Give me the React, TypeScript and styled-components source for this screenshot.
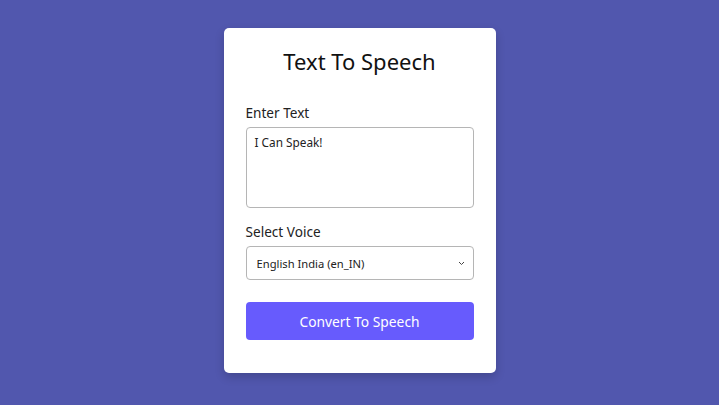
import React from "react";
import styled, { createGlobalStyle } from "styled-components";

const Global = createGlobalStyle`
  html, body { margin: 0; padding: 0; }
  body {
    background: #5157ae;
    font-family: "Noto Sans", "Open Sans", sans-serif;
  }
  * { box-sizing: border-box; }
`;

const Page = styled.div`
  width: 719px;
  height: 405px;
  display: flex;
  justify-content: center;
  align-items: flex-start;
  padding-top: 28px;
`;

const Card = styled.div`
  width: 272px;
  background: #ffffff;
  border-radius: 5px;
  padding: 18px 22px 33px;
  box-shadow: 0 4px 10px rgba(0, 0, 0, 0.18);
  display: flex;
  flex-direction: column;
`;

const Title = styled.h1`
  margin: 0 0 28px;
  font-size: 22px;
  font-weight: 400;
  color: #111;
  text-align: center;
  line-height: 30px;
`;

const Label = styled.label`
  font-size: 13.6px;
  color: #222;
  line-height: 18px;
  margin-bottom: 5px;
`;

const TextArea = styled.textarea`
  width: 228px;
  height: 81px;
  border: 1px solid #b5b5b5;
  border-radius: 4px;
  padding: 6px 8px;
  font-family: inherit;
  font-size: 11.8px;
  color: #222;
  resize: none;
  outline: none;
  margin-bottom: 15px;
`;

const SelectWrap = styled.div`
  position: relative;
  width: 228px;
  height: 34px;
  margin-bottom: 22px;
`;

const Select = styled.select`
  appearance: none;
  width: 100%;
  height: 100%;
  border: 1px solid #b5b5b5;
  border-radius: 4px;
  padding: 0 10px;
  background: #fff;
  font-family: inherit;
  font-size: 11.2px;
  color: #222;
  outline: none;
`;

const Chevron = styled.svg`
  position: absolute;
  right: 9px;
  top: 15px;
  pointer-events: none;
`;

const Button = styled.button`
  width: 228px;
  height: 38px;
  border: none;
  border-radius: 4px;
  background: #675bfd;
  color: #fff;
  font-family: inherit;
  font-size: 13.8px;
  cursor: pointer;
`;

export default function App() {
  return (
    <>
      <Global />
      <Page>
        <Card>
          <Title>Text To Speech</Title>
          <Label>Enter Text</Label>
          <TextArea defaultValue="I Can Speak!" />
          <Label>Select Voice</Label>
          <SelectWrap>
            <Select defaultValue="en_IN">
              <option value="en_IN">English India (en_IN)</option>
            </Select>
            <Chevron width="7" height="5" viewBox="0 0 7 5">
              <path d="M1 1 L3.5 3.5 L6 1" fill="none" stroke="#444" strokeWidth="1" />
            </Chevron>
          </SelectWrap>
          <Button>Convert To Speech</Button>
        </Card>
      </Page>
    </>
  );
}
